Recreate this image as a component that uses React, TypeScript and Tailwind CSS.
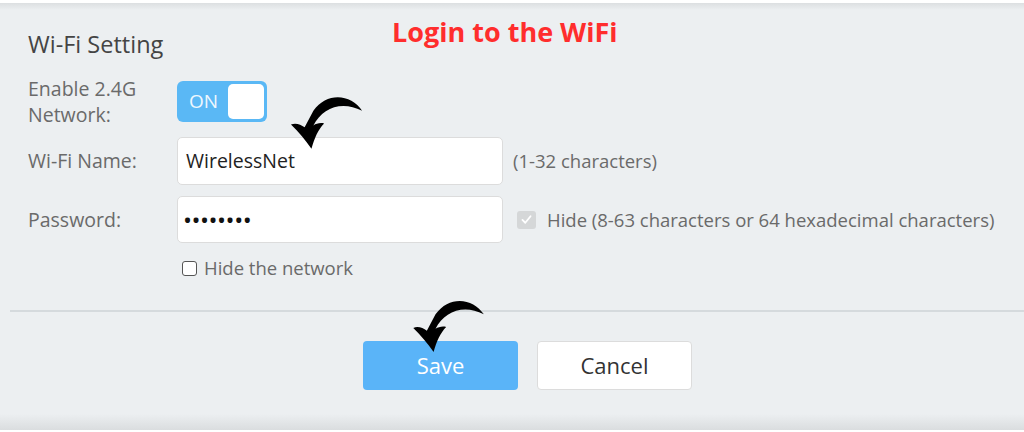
function Arrow({ className }: { className: string }) {
  return (
    <svg className={className} viewBox="0 0 80 60" fill="#000">
      <path d="M74 19 C63 2 38 -1 24 19 L15 36 C11 33 6 31 1 33 C9 41 16 49 22 58 C25 47 29 38 35 32 C31 31 27 32 24 34 C33 16 53 8 74 19 Z" />
    </svg>
  )
}

function FormRow({ label, children, className = "" }: { label: React.ReactNode; children: React.ReactNode; className?: string }) {
  return (
    <div className={`flex items-center ${className}`}>
      <div className="w-[149px] shrink-0 text-[19.5px] leading-[26px] text-[#6a6a6a]">{label}</div>
      {children}
    </div>
  )
}

export default function App() {
  return (
    <div className="relative w-[1024px] h-[432px] overflow-hidden bg-[#eceff1] flex flex-col font-['Open_Sans',sans-serif]">
      <div className="h-[3px] bg-white shrink-0" />
      <div className="h-[7px] shrink-0 bg-linear-to-b from-[#dcdfe1] to-[#eceff1]" />

      <div className="flex items-start pl-[28px] pt-[3px]">
        <div className="w-[364px] mt-[16px] text-[23.5px] leading-[30px] text-[#444]">Wi-Fi Setting</div>
        <div className="text-[27px] leading-[38px] font-bold text-[#ff2d2d]">Login to the WiFi</div>
      </div>

      <div className="flex flex-col pl-[28px]">
        <FormRow className="mt-[22px] h-[41px]" label={<><div>Enable 2.4G</div><div>Network:</div></>}>
          <div className="w-[90px] h-[41px] rounded-[6px] bg-[#5ab8f5] flex items-center justify-between pl-[12px] pr-[3px]">
            <span className="text-[19px] text-[#eef7fe]">ON</span>
            <span className="w-[36px] h-[35px] rounded-[5px] bg-white" />
          </div>
        </FormRow>

        <FormRow className="mt-[15px]" label="Wi-Fi Name:">
          <div className="w-[326px] h-[48px] rounded-[5px] bg-white border border-[#dcdcdc] flex items-center px-[8px] text-[19.5px] text-[#222]">
            WirelessNet
          </div>
          <span className="ml-[10px] text-[18.5px] text-[#6a6a6a]">(1-32 characters)</span>
        </FormRow>

        <FormRow className="mt-[11px]" label="Password:">
          <div className="w-[326px] h-[47px] rounded-[5px] bg-white border border-[#dcdcdc] flex items-center px-[5px] text-[24px] tracking-[-0.5px] text-[#111]">
            ••••••••
          </div>
          <span className="ml-[14px] w-[19px] h-[18px] rounded-[3px] bg-[#d5d7d8] flex items-center justify-center">
            <svg viewBox="0 0 16 16" className="w-[13px] h-[13px]" fill="none" stroke="#fff" strokeWidth="2.2" strokeLinecap="round" strokeLinejoin="round">
              <path d="M3 8.5 L6.5 12 L13 4" />
            </svg>
          </span>
          <span className="ml-[11px] text-[18.5px] text-[#6a6a6a]">Hide (8-63 characters or 64 hexadecimal characters)</span>
        </FormRow>

        <div className="mt-[17px] h-[16px] flex items-center pl-[154px]">
          <span className="w-[15px] h-[15px] rounded-[3px] border border-[#555] bg-white" />
          <span className="ml-[7px] text-[18.5px] text-[#6a6a6a]">Hide the network</span>
        </div>
      </div>

      <div className="mt-[34px] ml-[10px] h-[2px] bg-[#d5dadd] shrink-0" />

      <div className="mt-[29px] flex justify-center gap-[19px] pl-[31px]">
        <button className="w-[155px] h-[49px] rounded-[4px] bg-[#5ab4f8] text-white text-[22px]">Save</button>
        <button className="w-[155px] h-[49px] rounded-[4px] bg-white border border-[#dcdcdc] text-[#333] text-[22px]">Cancel</button>
      </div>

      <div className="flex-1" />
      <div className="h-[16px] shrink-0 bg-linear-to-b from-[#eceff1] to-[#dadddf]" />
      <div className="h-[2px] shrink-0 bg-white" />

      <Arrow className="absolute left-[290px] top-[92px] w-[78px] h-[59px]" />
      <Arrow className="absolute left-[411px] top-[296px] w-[80px] h-[58px]" />
    </div>
  )
}
